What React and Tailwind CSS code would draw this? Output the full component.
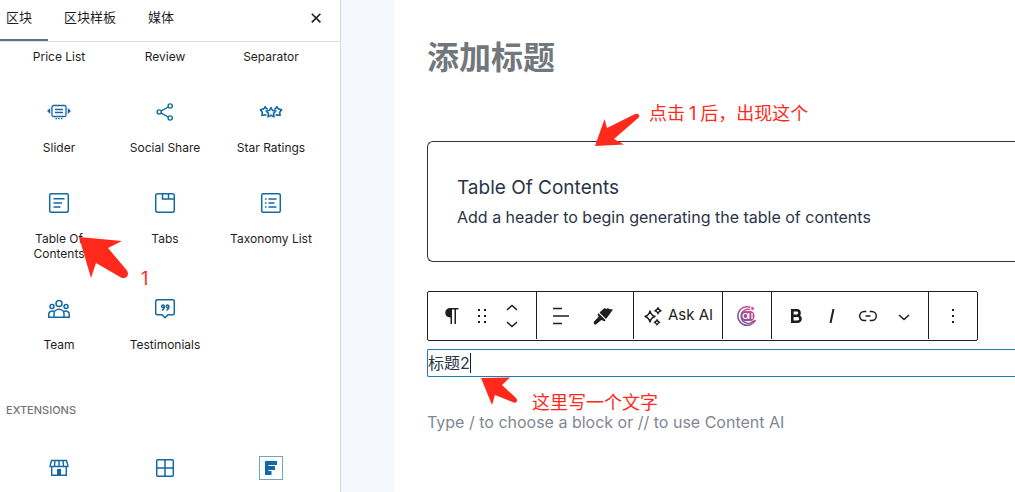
import { clsx } from "clsx";

const SliderIcon = () => (
  <svg width="24" height="24" viewBox="0 0 24 24" fill="none" stroke="#1269a3" strokeWidth="1.3">
    <rect x="5" y="5.5" width="14" height="11" rx="1.5" />
    <path d="M8 9.5h8M8 12.5h8" />
    <path d="M8.5 18.6h7" strokeDasharray="1.5 1.2" />
    <path d="M2.6 9.4v3L1 10.9zM21.4 9.4v3L23 10.9z" fill="#1269a3" />
  </svg>
);

const ShareIcon = () => (
  <svg width="24" height="24" viewBox="0 0 24 24" fill="none" stroke="#1269a3" strokeWidth="1.4">
    <circle cx="6.2" cy="12" r="2.1" />
    <circle cx="17.2" cy="6" r="2.1" />
    <circle cx="17.2" cy="18" r="2.1" />
    <path d="M8.2 10.9l7-3.9M8.2 13.1l7 3.9" />
  </svg>
);

const StarsIcon = () => (
  <svg width="24" height="24" viewBox="0 0 24 24" fill="none" stroke="#1269a3" strokeWidth="1.6" strokeLinejoin="round">
    <path d="M12 7.500l1.500 3 3.400.5-2.400 2.400.5 3.500-3-1.600-3 1.600.5-3.500-2.400-2.400 3.400-.5z" />
    <path d="M9 9l-1.500-.3-1.300-2-1.500 2.200-3.300.8 1.900 2.600-.4 3.200 2.800-.7 1.800.5" />
    <path d="M15 9l1.500-.3 1.300-2 1.500 2.200 3.300.8-1.900 2.600.4 3.200-2.800-.7-1.800.5" />
  </svg>
);

const ContentsIcon = () => (
  <svg width="24" height="24" viewBox="0 0 24 24" fill="none" stroke="#1269a3" strokeWidth="1.5">
    <rect x="2.7" y="2.7" width="18.6" height="18.6" rx="1.5" />
    <path d="M6.5 7.8h11M6.500 12h8.500M6.500 16h7" strokeWidth="1.6" />
  </svg>
);

const TabsIcon = () => (
  <svg width="24" height="24" viewBox="0 0 24 24" fill="none" stroke="#1269a3" strokeWidth="1.5">
    <rect x="2.7" y="2.7" width="18.6" height="18.6" rx="2" />
    <path d="M9.500 3v5H21M15.500 3v5" />
  </svg>
);

const TaxonomyIcon = () => (
  <svg width="24" height="24" viewBox="0 0 24 24" fill="none" stroke="#1269a3" strokeWidth="1.5">
    <rect x="2.7" y="2.7" width="18.6" height="18.6" rx="1.5" />
    <path d="M9.500 8h8M9.500 12h6M9.500 16h8" />
    <path d="M6 8h1.500M6 12h1.500M6 16h1.500" />
  </svg>
);

const TeamIcon = () => (
  <svg width="24" height="24" viewBox="0 0 24 24" fill="none" stroke="#1269a3" strokeWidth="1.5">
    <circle cx="12" cy="6.500" r="3" />
    <circle cx="5" cy="9.600" r="2" />
    <circle cx="19" cy="9.600" r="2" />
    <path d="M7 20.300v-3.500a5 4.500 0 0 1 10 0v3.500z" />
    <path d="M7 20.300H1.800v-3.500c0-2 2.600-3.500 5.600-2.300M17 20.300h5.200v-3.500c0-2-2.600-3.500-5.600-2.300" />
  </svg>
);

const QuoteIcon = () => (
  <svg width="24" height="24" viewBox="0 0 24 24" fill="none" stroke="#1269a3" strokeWidth="1.5">
    <path d="M4.200 2.700h15.600a1.500 1.500 0 0 1 1.500 1.500v12a1.500 1.500 0 0 1-1.500 1.500H15L12 20.700 9 17.700H4.200a1.500 1.500 0 0 1-1.500-1.500v-12a1.500 1.500 0 0 1 1.500-1.500z" />
    <circle cx="10" cy="9.200" r="1.300" />
    <circle cx="14.500" cy="9.200" r="1.300" />
    <path d="M11.300 9.200c0 2.200-.6 3.400-2.300 4M15.800 9.200c0 2.200-.6 3.400-2.300 4" />
  </svg>
);

const StoreIcon = () => (
  <svg width="24" height="24" viewBox="0 0 24 24" fill="none" stroke="#1269a3" strokeWidth="1.4">
    <path d="M4.500 4.500h15l1.300 4.500v1.500H3.200V9z" />
    <path d="M8 4.500L7.500 10M12 4.500V10M16 4.500l.5 5.500" />
    <path d="M4.700 10.500v8.800h14.600v-8.800" />
    <path d="M10 13h4v6.500h-4z" fill="#1269a3" stroke="none" />
  </svg>
);

const GridIcon = () => (
  <svg width="24" height="24" viewBox="0 0 24 24" fill="none" stroke="#1269a3" strokeWidth="1.5">
    <rect x="3.700" y="3.700" width="16.600" height="16.600" rx="1" />
    <path d="M12 4v16M4 12h16" />
  </svg>
);

const FormIcon = () => (
  <svg width="24" height="24" viewBox="0 0 24 24" fill="#1269a3">
    <rect x="0.500" y="0.500" width="23" height="23" fill="none" stroke="#6fa5c9" />
    <path d="M6 5h12v4H6zM6 10h10v4H6zM6 15h6.500v4H6z" />
    <path d="M6 5h3.500v14H6z" />
  </svg>
);

const blocks = [
  { name: "Slider", icon: SliderIcon },
  { name: "Social Share", icon: ShareIcon },
  { name: "Star Ratings", icon: StarsIcon },
  { name: "Table Of Contents", icon: ContentsIcon },
  { name: "Tabs", icon: TabsIcon },
  { name: "Taxonomy List", icon: TaxonomyIcon },
  { name: "Team", icon: TeamIcon },
  { name: "Testimonials", icon: QuoteIcon },
];

const extensions = [
  { name: "Store", icon: StoreIcon },
  { name: "Grid", icon: GridIcon },
  { name: "Form", icon: FormIcon },
];

const Tab = ({ label, active }) => (
  <button
    type="button"
    className={clsx(
      "h-full pb-1 text-[13px] border-b-2",
      active ? "pl-1.5 pr-4 border-[#5f7384]" : "px-4 border-transparent"
    )}
  >
    {label}
  </button>
);

const BlockItem = ({ name, icon: Icon }) => (
  <button type="button" className="flex flex-col items-center gap-4 px-5 pt-4 pb-5">
    <Icon />
    <span className="-mx-5">
      <span className={clsx("block", name.length > 14 && "max-w-20")}>{name}</span>
    </span>
  </button>
);

const Sidebar = () => (
  <aside className="w-[341px] shrink-0 border-r border-[#d5d9dc] bg-white text-xs leading-[15px] text-[#1e1e1e]">
    <div className="flex h-[42px] items-center border-b border-[#dddddd]">
      <Tab label="区块" active />
      <Tab label="区块样板" />
      <Tab label="媒体" />
      <button type="button" aria-label="Close" className="ml-auto mr-3 mb-1.5 p-1">
        <svg width="16" height="16" viewBox="0 0 16 16" fill="none" stroke="#1e1e1e" strokeWidth="1.6">
          <path d="M3.800 3.800l8.600 8.600M12.400 3.800l-8.600 8.600" />
        </svg>
      </button>
    </div>
    <div className="grid grid-cols-3 pl-1.5 pr-4 pt-[7px]">
      <button type="button" className="pb-5">Price List</button>
      <button type="button" className="pb-5">Review</button>
      <button type="button" className="pb-5">Separator</button>
    </div>
    <div className="grid grid-cols-3 items-start pl-1.5 pr-4">
      {blocks.map((b) => (
        <BlockItem key={b.name} {...b} />
      ))}
    </div>
    <h2 className="pt-[31px] pl-1.5 text-[11px] font-medium text-[#757575]">EXTENSIONS</h2>
    <div className="mt-[38px] grid grid-cols-3 pl-1.5 pr-4">
      {extensions.map(({ name, icon: Icon }) => (
        <button key={name} type="button" aria-label={name} className="flex justify-center">
          <Icon />
        </button>
      ))}
    </div>
  </aside>
);

const Tool = ({ label, className, children }) => (
  <button type="button" aria-label={label} className={clsx("flex h-full items-center justify-center", className)}>
    {children}
  </button>
);

const Toolbar = () => (
  <div className="flex h-[50px] w-fit divide-x divide-[#1e1e1e] rounded-xs border border-[#1e1e1e] bg-white pb-px text-[#1e1e1e]">
    <div className="flex w-[109px] pl-2">
      <Tool label="Paragraph" className="w-8">
        <svg width="24" height="24" viewBox="0 0 24 24" fill="currentColor">
          <path d="M10.500 4C7.500 4 5.300 6 5.300 8.800s2 4.700 4.700 4.700h.5V20H12V5.500h2.500V20H16V5.500h2.500V4z" />
        </svg>
      </Tool>
      <Tool label="Drag" className="w-7">
        <svg width="24" height="24" viewBox="0 0 24 24" fill="currentColor">
          <path d="M8 5h2v2H8zM14 5h2v2h-2zM8 11h2v2H8zM14 11h2v2h-2zM8 17h2v2H8zM14 17h2v2h-2z" />
        </svg>
      </Tool>
      <Tool label="Move" className="w-8">
        <svg width="14" height="24" viewBox="0 0 14 24" fill="none" stroke="currentColor" strokeWidth="1.5">
          <path d="M2 6l5-4.500L12 6M2 18l5 4.500L12 18" />
        </svg>
      </Tool>
    </div>
    <div className="flex w-[97px] px-1">
      <Tool label="Align" className="w-10">
        <svg width="24" height="24" viewBox="0 0 24 24" fill="none" stroke="currentColor" strokeWidth="1.5">
          <path d="M4 4.500h9M4 12h16M4 19.500h9" />
        </svg>
      </Tool>
      <Tool label="Styles" className="w-11">
        <svg width="24" height="24" viewBox="0 0 24 24" fill="currentColor">
          <path d="M8.500 8.500L13.500 4l2 1 1.500-1 1 1 4 .5-2.500 3.500-4.500 6z" />
          <path d="M7.500 9.300l7.200 7-1.200 1-3.200-1.300-4.800 4a1.700 1.700 0 0 1-2.400-2.400l4.500-4.800-1-2.500z" />
        </svg>
      </Tool>
    </div>
    <button type="button" className="flex w-[89px] items-center gap-1 pl-2">
      <svg width="22" height="22" viewBox="0 0 22 22" fill="none" stroke="currentColor" strokeWidth="1.4" strokeLinejoin="round">
        <path d="M8 6c.8 3.400 2 4.600 5 5.500-3 .9-4.200 2.100-5 5.500-.8-3.400-2-4.600-5-5.500 3-.9 4.200-2.100 5-5.500z" />
        <path d="M16 2.700c.5 2 1 2.500 3 3-2 .5-2.500 1-3 3-.5-2-1-2.500-3-3 2-.5 2.500-1 3-3zM15 14.700c.5 1.600 1 2.100 2.600 2.600-1.600.5-2.100 1-2.600 2.600-.5-1.600-1-2.100-2.600-2.600 1.600-.5 2.100-1 2.600-2.600z" />
      </svg>
      <span className="text-[15px]">Ask AI</span>
    </button>
    <div className="flex w-[49px]">
      <Tool label="Content AI" className="w-full">
        <svg width="22" height="22" viewBox="0 0 22 22" fill="none">
          <defs>
            <linearGradient id="ai" x1="18" y1="2" x2="4" y2="20" gradientUnits="userSpaceOnUse">
              <stop stopColor="#e0488b" />
              <stop offset="1" stopColor="#66509c" />
            </linearGradient>
          </defs>
          <path d="M14.500 2.300A9.300 9.300 0 1 0 19.500 15" stroke="url(#ai)" strokeWidth="1.5" />
          <path d="M14 4.500A7 7 0 1 0 17 16.200h2.500" stroke="url(#ai)" strokeWidth="1.5" />
          <rect x="5" y="6" width="13.500" height="10" rx="4.500" fill="url(#ai)" />
          <circle cx="9.500" cy="11" r="2.500" stroke="#fff" strokeWidth="1.200" />
          <path d="M12.800 8v6M16 8v6" stroke="#fff" strokeWidth="1.200" />
          <circle cx="16.500" cy="3.500" r="1.500" fill="#e0488b" />
        </svg>
      </Tool>
    </div>
    <div className="flex w-[157px] pl-1.5">
      <Tool label="Bold" className="w-9">
        <svg width="24" height="24" viewBox="0 0 24 24" fill="none" stroke="currentColor" strokeWidth="2.6">
          <path d="M8.300 6.300h4.500a2.700 2.700 0 0 1 0 5.400H8.300zM8.300 11.700h5.200a3 3 0 0 1 0 6H8.300z" />
        </svg>
      </Tool>
      <Tool label="Italic" className="w-9">
        <svg width="24" height="24" viewBox="0 0 24 24" fill="none" stroke="currentColor" strokeWidth="2">
          <path d="M13.500 5l-3 14" />
        </svg>
      </Tool>
      <Tool label="Link" className="w-9">
        <svg width="24" height="24" viewBox="0 0 24 24" fill="none" stroke="currentColor" strokeWidth="1.5">
          <path d="M10.300 7.500H8.200a4.500 4.500 0 0 0 0 9h2.100M13.700 7.500h2.100a4.500 4.500 0 0 1 0 9h-2.100M9.500 12h5" />
        </svg>
      </Tool>
      <Tool label="More" className="w-9">
        <svg width="24" height="24" viewBox="0 0 24 24" fill="none" stroke="currentColor" strokeWidth="1.5">
          <path d="M7 11l5 4.500 5-4.500" />
        </svg>
      </Tool>
    </div>
    <div className="flex w-12">
      <Tool label="Options" className="w-full">
        <svg width="24" height="24" viewBox="0 0 24 24" fill="currentColor">
          <path d="M11 5h2v2h-2zM11 11h2v2h-2zM11 17h2v2h-2z" />
        </svg>
      </Tool>
    </div>
  </div>
);

const Editor = () => (
  <main className="ml-[53px] min-w-0 flex-1 bg-white pt-9 pl-[33px] text-[#2a3447]">
    <input
      aria-label="Title"
      placeholder="添加标题"
      className="block h-11 w-full text-[32px] font-bold outline-none placeholder:text-[#72777c]"
    />
    <section className="mt-[61px] h-[121px] rounded-l-md border border-r-0 border-[#2a3447] py-8 pl-[29px]">
      <h3 className="text-[19px] leading-7">Table Of Contents</h3>
      <p className="text-base leading-[30px]">Add a header to begin generating the table of contents</p>
    </section>
    <div className="mt-[29px]">
      <Toolbar />
    </div>
    <div className="mt-2 flex h-7 items-center rounded-l-xs border border-r-0 border-[#1b7db3] pb-px">
      <input
        aria-label="Paragraph block"
        defaultValue="标题2"
        className="[field-sizing:content] text-base leading-6 outline-none"
      />
      <span className="h-5 w-px bg-[#1e1e1e]"></span>
    </div>
    <input
      aria-label="Add block"
      placeholder="Type / to choose a block or // to use Content AI"
      className="mt-[31px] block h-7 w-full text-base outline-none placeholder:text-[#828792]"
    />
  </main>
);

const Arrow = ({ points, className, width, height }) => (
  <svg width={width} height={height} className={clsx("absolute", className)} fill="#ff2a1c">
    <path d={points} />
  </svg>
);

const App = () => (
  <div className="relative flex min-h-screen overflow-hidden bg-[#f5f9fd] font-[Inter,'Noto_Sans_CJK_SC',sans-serif]">
    <Sidebar />
    <Editor />
    <Arrow
      className="left-[79px] top-[236px]"
      width={52}
      height={44}
      points="M0 1L43 5L29 12L48 34.500Q50 38 48 40.500Q46 43 42 41.500L17 27L12 42z"
    />
    <Arrow
      className="left-[595px] top-[112px]"
      width={48}
      height={36}
      points="M0 34L9.500 7L12 16L40 2Q43 1 44 3Q45 5 42 7L19 27L29 32.500z"
    />
    <Arrow
      className="left-[481px] top-[377px]"
      width={40}
      height={30}
      points="M0 1L29 .5L21 8L35 21Q37 23 35.500 25Q34 26.500 31.500 25L14 18L11 28z"
    />
    <span className="absolute left-[141px] top-[267px] text-lg leading-6 text-[#ff2a1c]">1</span>
    <span className="absolute left-[649px] top-[102px] text-lg leading-6 text-[#ff2a1c]">
      点击<span className="px-1">1</span>后，出现这个
    </span>
    <span className="absolute left-[532px] top-[391px] text-lg leading-6 text-[#ff2a1c]">这里写一个文字</span>
  </div>
);

export default App;
